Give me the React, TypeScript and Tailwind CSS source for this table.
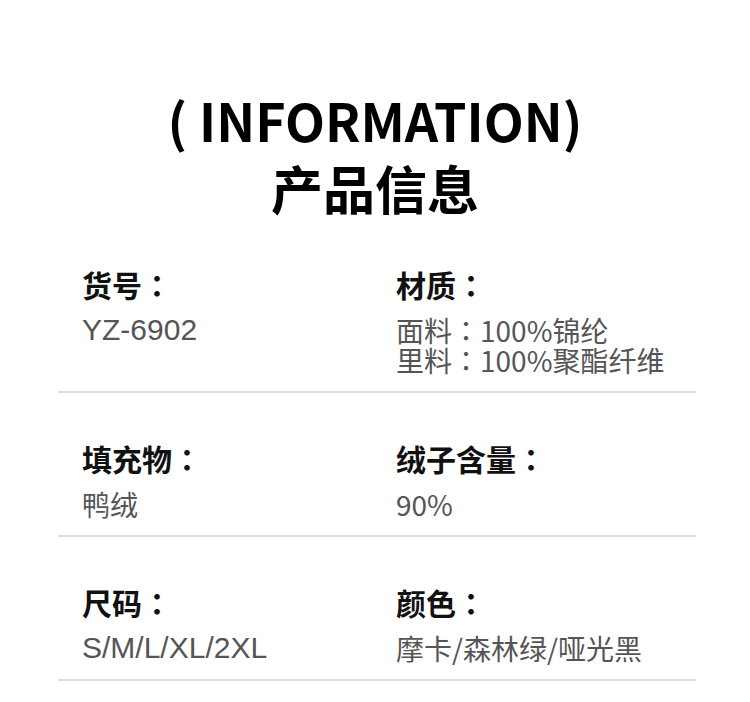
import React from "react";

const cjk = "font-['Noto_Sans_CJK_SC',sans-serif]";

function Colon() {
  return <span className="font-['Noto_Sans_CJK_JP',sans-serif]">：</span>;
}

type Item = { label: string; values: React.ReactNode[]; latin?: boolean };

function Cell({ item }: { item: Item }) {
  return (
    <div className="flex flex-col">
      <div className={`${cjk} text-[30px] leading-[36px] font-bold text-[#111]`}>
        {item.label}
        <Colon />
      </div>
      <div
        className={`mt-[13px] leading-[30px] text-[#555] ${
          item.latin
            ? "text-[30px] font-['Liberation_Sans','Noto_Sans_CJK_SC',sans-serif]"
            : `text-[28px] ${cjk}`
        }`}
      >
        {item.values.map((v, i) => (
          <React.Fragment key={i}>
            {i > 0 && <br />}
            {v}
          </React.Fragment>
        ))}
      </div>
    </div>
  );
}

const rows: [Item, Item][] = [
  [
    { label: "货号", values: ["YZ-6902"], latin: true },
    {
      label: "材质",
      values: [
        <>
          面料<Colon />100%锦纶
        </>,
        <>
          里料<Colon />100%聚酯纤维
        </>,
      ],
    },
  ],
  [
    { label: "填充物", values: ["鸭绒"] },
    { label: "绒子含量", values: ["90%"] },
  ],
  [
    { label: "尺码", values: ["S/M/L/XL/2XL"], latin: true },
    { label: "颜色", values: ["摩卡/森林绿/哑光黑"] },
  ],
];

export default function App() {
  return (
    <div className="w-[750px] h-[702px] bg-white overflow-hidden">
      <div className="pt-[90px] flex flex-col items-center text-black">
        <div className={`${cjk} text-[52px] leading-[60px] font-bold`}>( INFORMATION)</div>
        <div className={`${cjk} mt-[8px] text-[52px] leading-[60px] font-bold`}>产品信息</div>
      </div>
      <div className="ml-[58px] w-[638px] mt-[48px]">
        {rows.map((r, i) => (
          <div
            key={i}
            className={`grid grid-cols-[314px_1fr] pl-[24px] pb-[16px] border-b-2 border-[#dedede] ${
              i === 0 ? "" : "pt-[47px]"
            }`}
          >
            <Cell item={r[0]} />
            <Cell item={r[1]} />
          </div>
        ))}
      </div>
    </div>
  );
}
